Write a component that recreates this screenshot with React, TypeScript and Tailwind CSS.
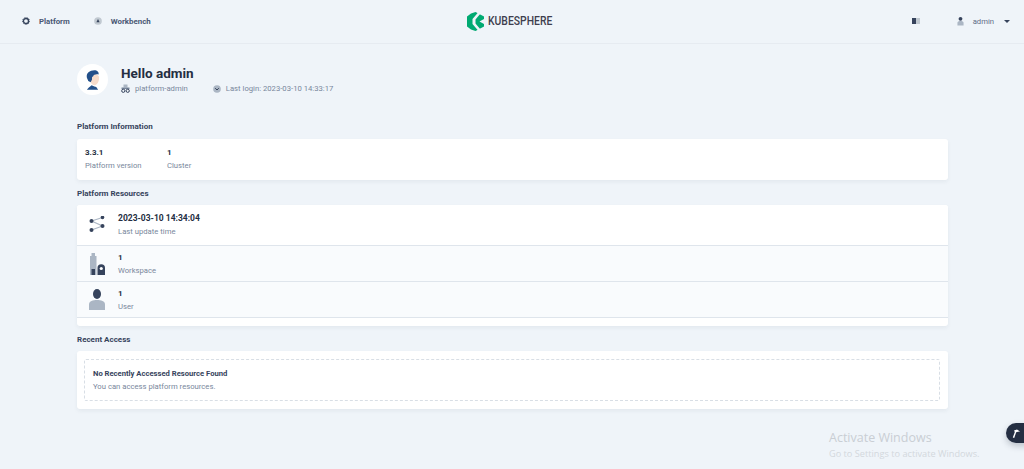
const Logo = () => (
  <svg className="shrink-0" width="17" height="19" viewBox="0 0 17 19">
    <path d="M0 4.500 L4 1.500 L8.500 0 L17 4.500 L17 14.500 L8.500 19 L4 17.500 L0 14.500 Z" fill="#00aa72" />
    <path d="M11.500 0 L5.500 7 L5.500 12 L11.500 19 L13.500 17.500 L8.500 11.500 L8.500 7.500 L13.500 1.500 Z" fill="#eff4f9" />
    <path d="M17 7 L12.500 9.500 L17 12 Z" fill="#eff4f9" />
  </svg>
)

const Avatar = () => (
  <svg width="15" height="20" viewBox="3 1 16 21">
    <path d="M8 8 C8 4 18 4 18 9 C18 13 16 17 13 17 C10 17 8 13 8 8 Z" fill="#f7dccb" />
    <path d="M5 9 C4 4 8 1 13 1 C16 1 18 3 17.500 5.500 C15 5 12 5.500 11.500 8 L10.500 8 L10.500 11 L9 14 L6.500 12.500 Z" fill="#23508a" />
    <path d="M5 22 C6 20 8 19 10 17 L13 18.500 L15 19 L17 22 Z" fill="#23508a" />
  </svg>
)

const ShareIcon = () => (
  <svg width="16" height="18" viewBox="0 0 16 18">
    <path d="M2.500 5 L13.500 1.500 M2.500 5 L13.500 10 L2.500 14" stroke="#abb6c4" strokeWidth="1.200" fill="none" />
    <circle cx="2.500" cy="5" r="2" fill="#36435c" />
    <circle cx="13.500" cy="1.500" r="1.800" fill="#36435c" />
    <circle cx="13.500" cy="10" r="2" fill="#36435c" />
    <circle cx="2.500" cy="14" r="2" fill="#36435c" />
  </svg>
)

const WorkspaceIcon = () => (
  <svg width="16" height="22" viewBox="0 0 16 22">
    <path d="M1 3 L2.500 3 L2.500 0 L6 0 L6 3 L7.500 3 L7.500 22 L1 22 Z" fill="#abb6c4" />
    <rect x="2.500" y="16" width="3.500" height="6" fill="#36435c" />
    <path d="M8.500 22 L8.500 15 A3.750 3.750 0 0 1 16 15 L16 22 Z" fill="#36435c" />
    <circle cx="12.250" cy="15.500" r="1.600" fill="#ffffff" />
  </svg>
)

const UserIcon = () => (
  <svg width="16" height="21" viewBox="0 0 16 21">
    <ellipse cx="8" cy="5" rx="4" ry="5" fill="#36435c" />
    <path d="M0 21 L0 15.500 C0 12 4 11 8 11 C12 11 16 12 16 15.500 L16 21 Z" fill="#abb6c4" />
  </svg>
)

const Row = ({ icon, value, label, className, valueClass }: { icon: React.ReactNode; value: string; label: string; className: string; valueClass: string }) => (
  <div className={`flex items-center border-b border-[#dfe5ec] ${className}`}>
    <div className="w-[41px] flex justify-center shrink-0 pr-[1px]">{icon}</div>
    <div>
      <div className={`leading-[13px] font-bold text-[#242e42] ${valueClass}`}>{value}</div>
      <div className="text-[7.700px] leading-[13px] text-[#79879c]">{label}</div>
    </div>
  </div>
)

const SectionTitle = ({ children }: { children: React.ReactNode }) => (
  <div className="text-[8px] leading-[12px] font-bold text-[#36435c]">{children}</div>
)

export default function App() {
  return (
    <div className="relative w-[1024px] h-[469px] overflow-hidden bg-[#eff4f9] font-['Roboto',sans-serif]">
      {/* Header */}
      <div className="h-[44px] flex items-center border-b border-[#e6ebf1] pl-[22px] pr-[14px]">
        <div className="flex-1 flex items-center">
          <svg width="8" height="8" viewBox="0 0 10 10">
            <circle cx="5" cy="5" r="3.200" fill="none" stroke="#36435c" strokeWidth="1.800" />
            <circle cx="5" cy="5" r="4.400" fill="none" stroke="#36435c" strokeWidth="1" strokeDasharray="1.500 1.500" />
          </svg>
          <span className="ml-[9px] text-[7.800px] font-bold text-[#4a5874]">Platform</span>
          <svg className="ml-[24px]" width="8" height="8" viewBox="0 0 10 10">
            <circle cx="5" cy="5" r="4.800" fill="#c1c9d1" />
            <path d="M5 2.500 L7 6.500 L3 6.500 Z" fill="#36435c" />
          </svg>
          <span className="ml-[9px] text-[7.900px] font-bold text-[#4a5874]">Workbench</span>
        </div>
        <div className="flex items-center mr-[12px] w-[86px]">
          <Logo />
          <span className="ml-[4px] text-[12.500px] font-medium text-[#3e3e4e] scale-x-[0.83] origin-left whitespace-nowrap">KUBESPHERE</span>
        </div>
        <div className="flex-1 flex items-center justify-end">
          <div className="flex w-[8px] h-[6px]">
            <div className="w-[4px] bg-[#36435c]" />
            <div className="w-[4px] bg-[#c1c9d1]" />
          </div>
          <svg className="ml-[37px]" width="7" height="10" viewBox="0 0 8 10">
            <circle cx="4" cy="2.500" r="2.200" fill="#36435c" />
            <path d="M0.500 10 L0.500 7 C0.500 5.500 2 5 4 5 C6 5 7.500 5.500 7.500 7 L7.500 10 Z" fill="#abb6c4" />
          </svg>
          <span className="ml-[9px] text-[7.700px] text-[#5f6d88]">admin</span>
          <svg className="ml-[10px]" width="6" height="3" viewBox="0 0 6 3">
            <path d="M0 0 L6 0 L3 3 Z" fill="#36435c" />
          </svg>
        </div>
      </div>

      <div className="w-[871px] ml-[77px]">
        {/* Greeting */}
        <div className="flex items-center mt-[20px]">
          <div className="w-[31px] h-[31px] rounded-full bg-white flex items-center justify-center overflow-hidden">
            <Avatar />
          </div>
          <div className="ml-[13px] -mt-[1px]">
            <div className="text-[13.500px] leading-[18px] font-bold text-[#242e42]">Hello admin</div>
            <div className="flex items-center mt-[1px] text-[7.700px] leading-[12px] text-[#79879c]">
              <svg width="9" height="9" viewBox="0 0 9 9">
                <rect x="2.500" y="0.500" width="4" height="3" fill="#abb6c4" />
                <rect x="0.500" y="3.500" width="8" height="1.500" fill="#79879c" />
                <circle cx="2.300" cy="6.800" r="1.600" fill="none" stroke="#36435c" strokeWidth="1" />
                <circle cx="6.700" cy="6.800" r="1.600" fill="none" stroke="#36435c" strokeWidth="1" />
              </svg>
              <span className="ml-[5px]">platform-admin</span>
              <svg className="ml-[25px]" width="8" height="8" viewBox="0 0 8 8">
                <circle cx="4" cy="4" r="3.800" fill="#abb6c4" />
                <path d="M2.200 3.200 L4 5 L5.800 3.200" fill="none" stroke="#36435c" strokeWidth="1" />
              </svg>
              <span className="ml-[5px]">Last login: 2023-03-10 14:33:17</span>
            </div>
          </div>
        </div>

        {/* Platform info */}
        <div className="mt-[26px]"><SectionTitle>Platform Information</SectionTitle></div>
        <div className="mt-[6px] h-[41px] bg-white rounded-[3px] shadow-[0_2px_4px_rgba(36,46,66,0.06)] flex items-center pl-[8px] pb-[2px]">
          <div className="w-[82px]">
            <div className="text-[8px] leading-[13px] font-bold text-[#242e42]">3.3.1</div>
            <div className="text-[7.700px] leading-[13px] text-[#79879c]">Platform version</div>
          </div>
          <div>
            <div className="text-[8px] leading-[13px] font-bold text-[#242e42]">1</div>
            <div className="text-[7.700px] leading-[13px] text-[#79879c]">Cluster</div>
          </div>
        </div>

        {/* Platform resources */}
        <div className="mt-[8px]"><SectionTitle>Platform Resources</SectionTitle></div>
        <div className="mt-[5px] h-[121px] bg-white rounded-[3px] shadow-[0_2px_4px_rgba(36,46,66,0.06)] overflow-hidden">
          <Row icon={<ShareIcon />} value="2023-03-10 14:34:04" label="Last update time" className="h-[41px] bg-white" valueClass="text-[8.500px]" />
          <Row icon={<WorkspaceIcon />} value="1" label="Workspace" className="h-[36px] bg-[#f9fbfd]" valueClass="text-[8px]" />
          <Row icon={<UserIcon />} value="1" label="User" className="h-[36px] bg-[#f9fbfd]" valueClass="text-[8px]" />
        </div>

        {/* Recent access */}
        <div className="mt-[8px]"><SectionTitle>Recent Access</SectionTitle></div>
        <div className="mt-[5px] h-[58px] bg-white rounded-[3px] shadow-[0_2px_4px_rgba(36,46,66,0.06)] pt-[8px] pl-[7px] pr-[8px]">
          <div className="h-[42px] border border-dashed border-[#d8dee5] rounded-[2px] flex flex-col justify-center pl-[8px]">
            <div className="text-[7.650px] leading-[13px] font-bold text-[#36435c]">No Recently Accessed Resource Found</div>
            <div className="text-[7.700px] leading-[13px] text-[#79879c]">You can access platform resources.</div>
          </div>
        </div>
      </div>

      {/* Windows watermark */}
      <div className="absolute left-[829px] top-[430px] pointer-events-none font-['Open_Sans',sans-serif] text-[#c9ced4]">
        <div className="text-[12.500px] leading-[16px]">Activate Windows</div>
        <div className="text-[9.200px] leading-[14px] mt-[1px] text-[#d3d8dd]">Go to Settings to activate Windows.</div>
      </div>

      {/* Toolbox button */}
      <div className="absolute left-[1006px] top-[423px] w-[30px] h-[20px] rounded-[10px] bg-[#242e42] shadow-[0_3px_6px_rgba(36,46,66,0.25)] flex items-center pl-[6px]">
        <svg width="8" height="9" viewBox="0 0 8 9">
          <path d="M2 1.500 L5 0.500 L8 2.500 L6 2.800 L4.200 3.200 L2.200 9 L0.800 8.400 L2.800 3 Z" fill="#ffffff" />
        </svg>
      </div>
    </div>
  )
}
